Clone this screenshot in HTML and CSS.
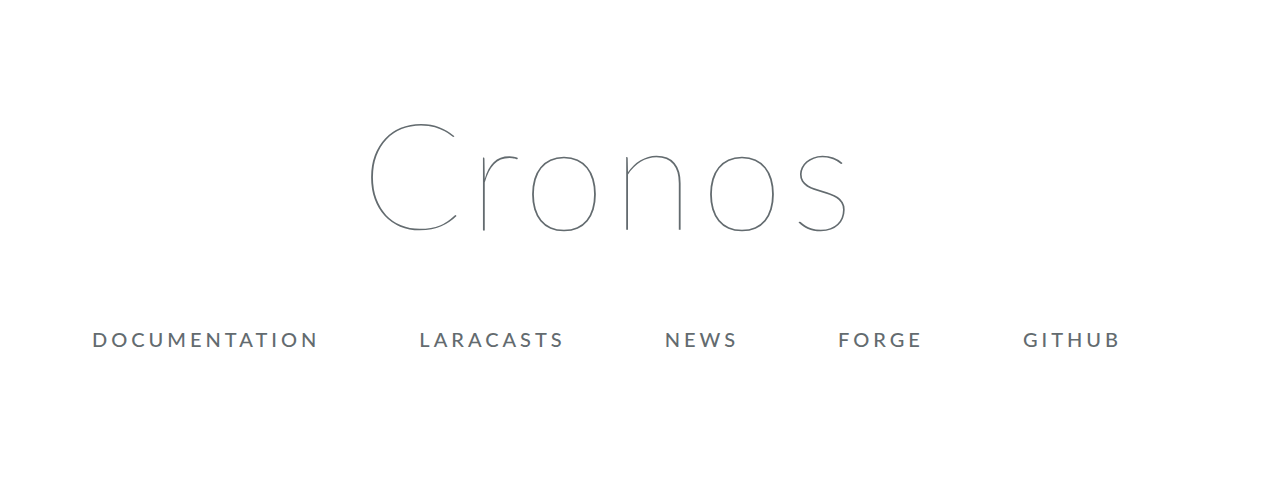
FILE: index.html
```html
<!DOCTYPE html>
<html lang="en">
<head>
<meta charset="utf-8">
<title>Cronos</title>
<link rel="stylesheet" href="styles.css">
</head>
<body>
<div class="page">
  <div class="content">
    <div class="title">Cronos</div>
    <nav class="links">
      <a href="#">Documentation</a>
      <a href="#">Laracasts</a>
      <a href="#">News</a>
      <a href="#">Forge</a>
      <a href="#">GitHub</a>
    </nav>
  </div>
</div>
</body>
</html>
```
FILE: styles.css
```css
html, body {
  margin: 0;
  padding: 0;
  background: #ffffff;
  color: #636b6f;
  height: 100%;
}
.page {
  height: 485px;
  display: flex;
  justify-content: center;
  padding-right: 66px;
  box-sizing: border-box;
}
.content {
  display: flex;
  flex-direction: column;
  align-items: center;
  padding-top: 98px;
}
.title {
  font-family: "Lato", sans-serif;
  font-weight: 100;
  font-size: 149px;
  letter-spacing: 7.5px;
  line-height: 1;
  height: 176px;
  padding-left: 7.5px;
}
.links {
  display: flex;
  margin-top: 53px;
}
.links a {
  font-family: "Lato", sans-serif;
  font-weight: 500;
  font-size: 20px;
  letter-spacing: 4px;
  text-transform: uppercase;
  color: #636b6f;
  text-decoration: none;
  padding: 0 49.5px;
}
```
